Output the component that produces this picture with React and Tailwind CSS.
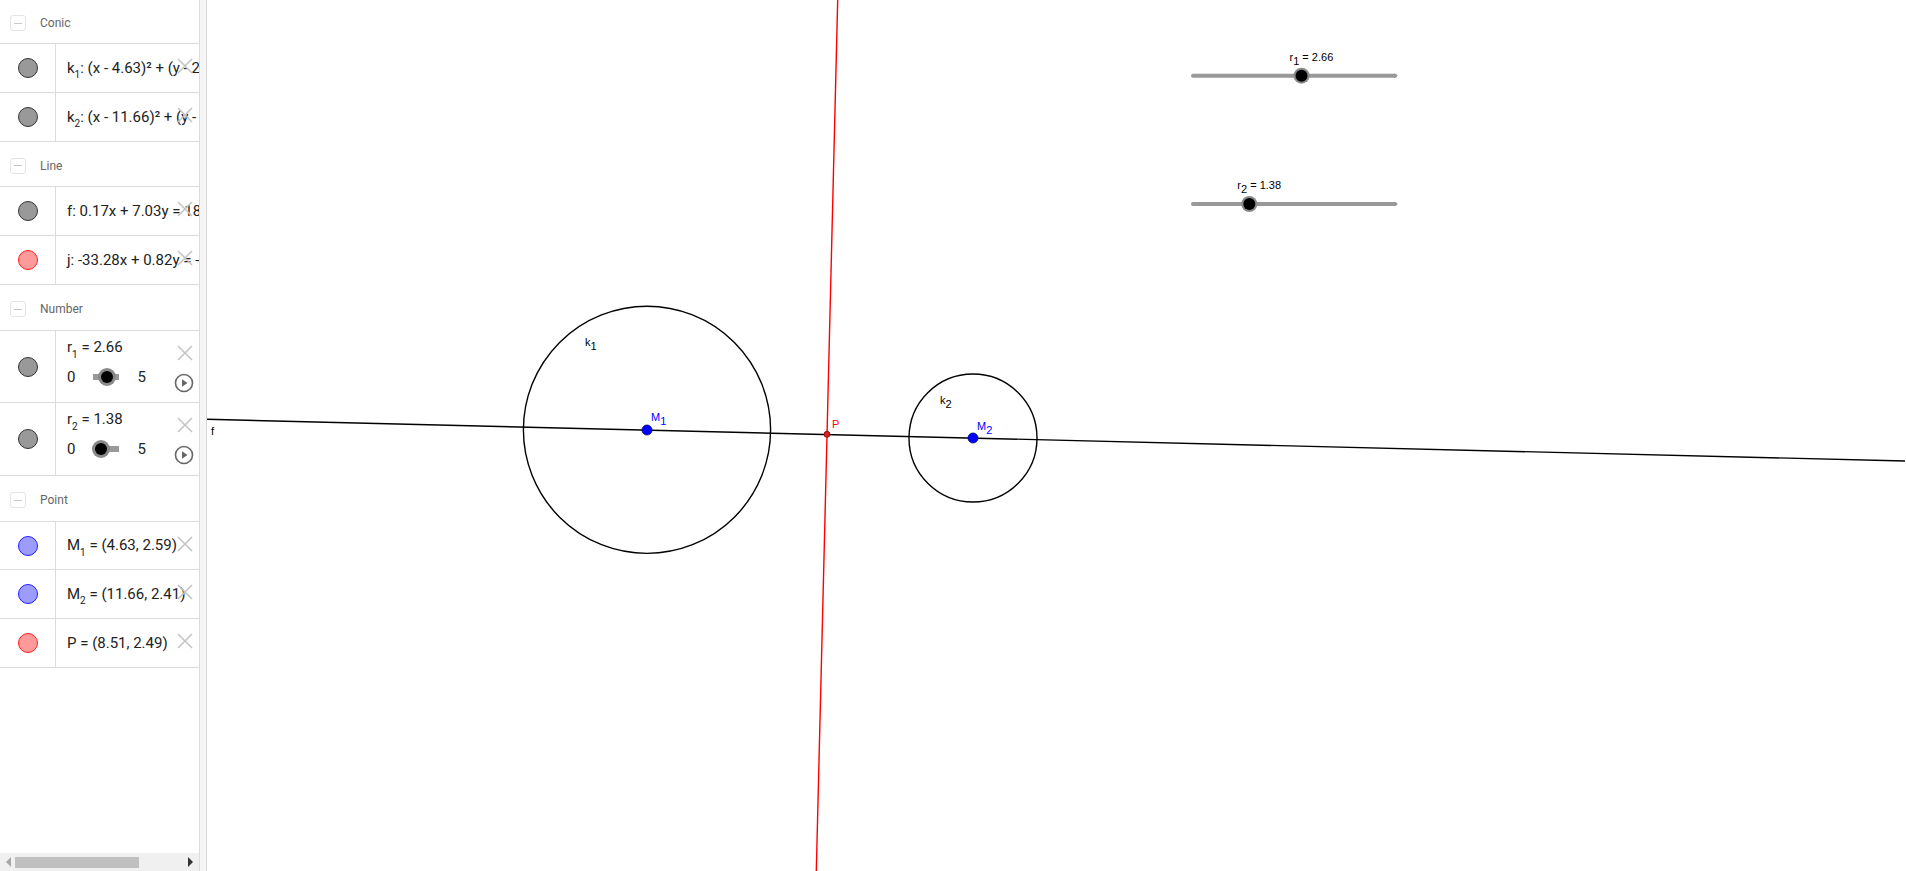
import React from "react";

const font = { fontFamily: 'Roboto, "Liberation Sans", sans-serif' };

function Header({ title, h }) {
  return (
    <div className={`${h} flex items-center border-b border-[#dcdcdc] pl-[10px] pt-[3px]`}>
      <div className="w-[16px] h-[16px] rounded-[3px] border border-[#e4e4e4] flex items-center justify-center">
        <div className="w-[8px] h-[1px] bg-[#c8c8c8]" />
      </div>
      <span className="ml-[14px] text-[12px] text-[#666]">{title}</span>
    </div>
  );
}

function Dot({ color }) {
  const cls =
    color === "red"
      ? "bg-[#ff9a9a] border-[#ff1f1f]"
      : color === "blue"
      ? "bg-[#9c9cff] border-[#2020ff]"
      : "bg-[#999] border-[#333]";
  return <div className={`w-[20px] h-[20px] rounded-full border ${cls}`} />;
}

function Cross() {
  return (
    <svg width="18" height="18" viewBox="0 0 18 18" className="absolute right-[5px] top-[13px]">
      <path d="M2 2 L16 16 M16 2 L2 16" stroke="#c4c4c4" strokeWidth="1.6" />
    </svg>
  );
}

function Row({ color, children, h = "h-[49px]", tall, slider }) {
  return (
    <div className={`relative flex border-b border-[#dcdcdc] ${h}`}>
      <div className="w-[56px] shrink-0 border-r border-[#dcdcdc] flex items-center justify-center">
        <Dot color={color} />
      </div>
      <div className="flex-1 overflow-hidden pl-[11px] text-[15px] text-[#222] whitespace-nowrap">
        {tall ? (
          <div className="flex flex-col pt-[4px]">
            <div className="h-[24px] leading-[24px]">{children}</div>
            <div className="h-[36px] flex items-center">
              <span>0</span>
              <div className="relative ml-[18px] w-[26px] h-[6px] bg-[#999]">
                <div
                  className="absolute top-1/2 -translate-y-1/2 -translate-x-1/2 w-[18px] h-[18px] rounded-full bg-[#8a8a8a] flex items-center justify-center"
                  style={{ left: `${slider * 100}%` }}
                >
                  <div className="w-[12px] h-[12px] rounded-full bg-black" />
                </div>
              </div>
              <span className="ml-[18px]">5</span>
            </div>
          </div>
        ) : (
          <div className="h-full flex items-center">
            <span>{children}</span>
          </div>
        )}
      </div>
      <Cross />
      {tall && (
        <svg width="20" height="20" viewBox="0 0 20 20" className="absolute right-[5px] top-[42px]">
          <circle cx="10" cy="10" r="8.5" fill="none" stroke="#666" strokeWidth="1.6" />
          <path d="M8 6.2 L13.5 10 L8 13.8 Z" fill="#666" />
        </svg>
      )}
    </div>
  );
}

const S = ({ children }) => <sub className="text-[10px] align-[-3px]">{children}</sub>;

function AlgebraPanel() {
  return (
    <div className="w-[200px] shrink-0 flex flex-col border-r border-[#dcdcdc] bg-white" style={font}>
      <div className="flex-1 overflow-hidden">
        <Header title="Conic" h="h-[44px]" />
        <Row color="gray">k<S>1</S>: (x - 4.63)² + (y - 2.59)² = 7.08</Row>
        <Row color="gray">k<S>2</S>: (x - 11.66)² + (y - 2.41)² = 1.9</Row>
        <Header title="Line" h="h-[45px]" />
        <Row color="gray">f: 0.17x + 7.03y = 18.97</Row>
        <Row color="red">j: -33.28x + 0.82y = -281.3</Row>
        <Header title="Number" h="h-[46px]" />
        <Row color="gray" tall h="h-[72px]" slider={0.532}>r<S>1</S> = 2.66</Row>
        <Row color="gray" tall h="h-[73px]" slider={0.276}>r<S>2</S> = 1.38</Row>
        <Header title="Point" h="h-[46px]" />
        <Row color="blue" h="h-[48px]">M<S>1</S> = (4.63, 2.59)</Row>
        <Row color="blue">M<S>2</S> = (11.66, 2.41)</Row>
        <Row color="red">P = (8.51, 2.49)</Row>
      </div>
      <div className="h-[18px] bg-[#f0f0f0] flex items-center px-[4px]">
        <svg width="8" height="10" viewBox="0 0 8 10">
          <path d="M7 0 L2 5 L7 10 Z" fill="#a8a8a8" />
        </svg>
        <div className="ml-[3px] w-[124px] h-[11px] bg-[#c0c0c0]" />
        <div className="flex-1" />
        <svg width="8" height="10" viewBox="0 0 8 10">
          <path d="M1 0 L6 5 L1 10 Z" fill="#333" />
        </svg>
      </div>
    </div>
  );
}

function Slider({ x1, x2, y, t, label, sub, value }) {
  const kx = x1 + (x2 - x1) * t;
  return (
    <g>
      <line x1={x1} y1={y} x2={x2 - 2} y2={y} stroke="#999" strokeWidth="4" strokeLinecap="round" />
      <path d={`M${x2 - 3} ${y - 2.5} L${x2 + 1} ${y} L${x2 - 3} ${y + 2.5} Z`} fill="#999" />
      <circle cx={kx} cy={y} r="8" fill="#8a8a8a" />
      <circle cx={kx} cy={y} r="6" fill="#000" />
      <text x={kx - 12} y={y - 15} fontSize="11" fill="#000" fontFamily="Liberation Sans, sans-serif">
        {label}
        <tspan fontSize="11" dy="4">{sub}</tspan>
        <tspan dy="-4"> = {value}</tspan>
      </text>
    </g>
  );
}

function Canvas() {
  const lf = "Liberation Sans, sans-serif";
  return (
    <div className="flex-1 relative bg-white">
      <svg className="absolute inset-0" width="100%" height="100%" viewBox="0 0 1698 871" preserveAspectRatio="xMinYMin">
        {/* canvas starts at x=208 in page coordinates */}
        <g transform="translate(-208 0)">
          <line x1="208" y1="419.3" x2="1906" y2="461" stroke="#000" strokeWidth="1.4" />
          <line x1="838.7" y1="0" x2="817.3" y2="871" stroke="#ff0000" strokeWidth="1.4" />
          <circle cx="648" cy="429.8" r="123.6" fill="none" stroke="#000" strokeWidth="1.4" />
          <circle cx="974" cy="438" r="64" fill="none" stroke="#000" strokeWidth="1.4" />
          <circle cx="648" cy="430" r="5" fill="#0000ff" stroke="#00007a" strokeWidth="0.8" />
          <circle cx="974" cy="438" r="5" fill="#0000ff" stroke="#00007a" strokeWidth="0.8" />
          <circle cx="828" cy="434.3" r="3" fill="#d42020" stroke="#800" strokeWidth="0.8" />

          <text x="586" y="346" fontSize="11" fontFamily={lf}>k<tspan dy="4">1</tspan></text>
          <text x="941" y="404" fontSize="11" fontFamily={lf}>k<tspan dy="4">2</tspan></text>
          <text x="652" y="421" fontSize="11" fill="#0000ff" fontFamily={lf}>M<tspan dy="4">1</tspan></text>
          <text x="978" y="430" fontSize="11" fill="#0000ff" fontFamily={lf}>M<tspan dy="4">2</tspan></text>
          <text x="833" y="428" fontSize="11" fill="#ff0000" fontFamily={lf}>P</text>
          <text x="212" y="435" fontSize="11" fontFamily={lf}>f</text>

          <Slider x1={1194} x2={1398} y={75.7} t={0.532} label="r" sub="1" value="2.66" />
          <Slider x1={1194} x2={1398} y={204} t={0.276} label="r" sub="2" value="1.38" />
        </g>
      </svg>
    </div>
  );
}

export default function App() {
  return (
    <div className="w-full h-[871px] flex overflow-hidden bg-white">
      <AlgebraPanel />
      <div className="w-[7px] shrink-0 bg-[#f5f5f5] border-r border-[#d8d8d8]" />
      <Canvas />
    </div>
  );
}
